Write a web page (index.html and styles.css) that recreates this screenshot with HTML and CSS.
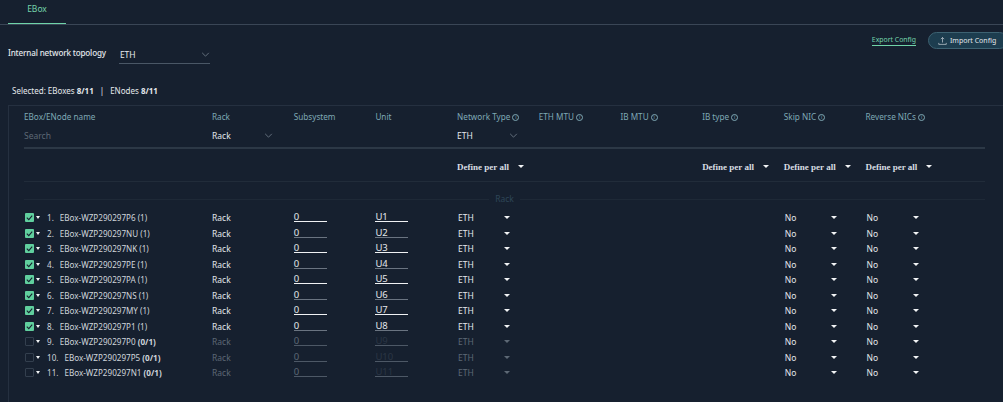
FILE: index.html
```html
<!DOCTYPE html>
<html lang="en">
<head>
    <meta charset="UTF-8">
    <title>EBox config</title>
    <link rel="stylesheet" href="styles.css">
</head>
<body>
    <div class="tabs">
        <div class="tab">EBox</div>
    </div>

    <div class="toolbar">
        <div class="topology">
            <span class="topology-label">Internal network topology</span>
            <div class="topology-select">
                <span>ETH</span>
                <svg class="chevron" viewBox="0 0 10 6"><path d="M1 1l4 4 4-4"/></svg>
            </div>
        </div>
        <div class="actions">
            <a class="export-link">Export Config</a>
            <button class="import-btn">
                <svg viewBox="0 0 12 12"><path d="M6 8V1.5M3.8 3.5L6 1.3l2.2 2.2M1 8.5v2h10v-2"/></svg>
                Import Config
            </button>
        </div>
    </div>

    <div class="selected">Selected: EBoxes <b>8/11</b><span class="sep">|</span>ENodes <b>8/11</b></div>

    <div class="panel">
        <div class="row head">
            <div>EBox/ENode name</div>
            <div>Rack</div>
            <div>Subsystem</div>
            <div>Unit</div>
            <div>Network Type <i class="info">i</i></div>
            <div>ETH MTU <i class="info">i</i></div>
            <div>IB MTU <i class="info">i</i></div>
            <div>IB type <i class="info">i</i></div>
            <div>Skip NIC <i class="info">i</i></div>
            <div>Reverse NICs <i class="info">i</i></div>
        </div>
        <div class="row filters">
            <div class="search">Search</div>
            <div class="filter-select">Rack <svg class="chevron" viewBox="0 0 10 6"><path d="M1 1l4 4 4-4"/></svg></div>
            <div></div>
            <div></div>
            <div class="filter-select">ETH <svg class="chevron" viewBox="0 0 10 6"><path d="M1 1l4 4 4-4"/></svg></div>
        </div>
        <div class="row define">
            <div></div><div></div><div></div><div></div>
            <div class="per-all">Define per all <span class="caret"></span></div>
            <div></div><div></div>
            <div class="per-all">Define per all <span class="caret"></span></div>
            <div class="per-all">Define per all <span class="caret"></span></div>
            <div class="per-all">Define per all <span class="caret"></span></div>
        </div>
        <div class="group"><span>Rack</span></div>
        <div id="rows"></div>
    </div>

    <script>
        const boxes = [
            ['P6', 1], ['NU', 1], ['NK', 1], ['PE', 1], ['PA', 1], ['NS', 1],
            ['MY', 1], ['P1', 1], ['P0', 0], ['P5', 0], ['N1', 0]
        ];

        const html = boxes.map((box, index) => {
            const on = box[1] === 1;
            const check = on
                ? '<span class="check on"><svg viewBox="0 0 10 10"><path d="M2 5.2l2.2 2.2L8 3"/></svg></span>'
                : '<span class="check"></span>';
            const count = on ? '(1)' : '<b>(0/1)</b>';
            const underline = index % 2 === 0 ? 'field' : 'field dim';
            return `<div class="row item ${on ? '' : 'off'}">
                <div class="name">${check}<span class="caret small"></span>
                    <span class="num">${index + 1}.</span>
                    <span class="box">EBox-WZP290297${box[0]} ${count}</span></div>
                <div class="muted">Rack</div>
                <div class="${underline} muted">0</div>
                <div class="${underline} unit muted">U${index + 1}</div>
                <div class="pick muted"><span>ETH</span><span class="caret"></span></div>
                <div></div><div></div><div></div>
                <div class="pick"><span>No</span><span class="caret"></span></div>
                <div class="pick"><span>No</span><span class="caret"></span></div>
            </div>`;
        }).join('');
        document.getElementById('rows').innerHTML = html;
    </script>
</body>
</html>
```

FILE: styles.css
```css
body {
    margin: 0;
    height: 402px;
    overflow: hidden;
    background: #16202f;
    color: #e4e8ec;
    font-family: "Noto Sans", Roboto, sans-serif;
    font-size: 8.5px;
}

.tabs {
    height: 24px;
    border-bottom: 1px solid #3a4656;
    padding-left: 8px;
}

.tab {
    width: 58px;
    height: 23px;
    border-bottom: 1px solid #6fd3a8;
    color: #74d3ab;
    text-align: center;
    line-height: 18px;
}

.toolbar {
    display: flex;
    justify-content: space-between;
    height: 53px;
    padding: 7px 0 0 8px;
}

.topology {
    display: flex;
    align-items: flex-start;
    margin-top: 13px;
}

.topology-label {
    font-size: 8.1px;
    font-weight: 500;
    letter-spacing: -0.16px;
    line-height: 15px;
}

.topology-select {
    display: flex;
    justify-content: space-between;
    align-items: center;
    width: 91px;
    height: 19px;
    margin-left: 13px;
    padding-left: 1px;
    border-bottom: 1px solid #4a5766;
    box-sizing: border-box;
}

.chevron {
    width: 9px;
    height: 5px;
    fill: none;
    stroke: #8a96a3;
    stroke-width: 0.8;
}

.actions {
    display: flex;
    align-items: flex-start;
}

.export-link {
    margin-top: 2px;
    border-bottom: 1px solid #6fd3a8;
    color: #74d3ab;
    font-size: 6.9px;
    line-height: 11px;
}

.import-btn {
    display: flex;
    align-items: center;
    gap: 3px;
    width: 80px;
    height: 17px;
    margin: 0 -5px 0 12px;
    padding: 0 0 0 9px;
    border: 1px solid #3d6272;
    border-radius: 9px;
    background: #1d3d4f;
    color: #e4e8ec;
    font-family: inherit;
    font-size: 7px;
}

.import-btn svg {
    width: 9px;
    height: 10px;
    fill: none;
    stroke: #e4e8ec;
    stroke-width: 0.8;
}

.selected {
    height: 20px;
    padding-left: 12px;
    font-size: 8px;
    line-height: 12px;
}

.sep {
    margin: 0 6px;
}

.panel {
    height: 296px;
    margin-left: 8px;
    padding-left: 15px;
    border-top: 1px solid #253040;
    border-left: 1px solid #253040;
}

.row {
    display: grid;
    grid-template-columns: 188px repeat(9, 81.7px);
}

.head {
    height: 21px;
    color: #7fa9b5;
    font-size: 8.2px;
    line-height: 21px;
}

.info {
    display: inline-block;
    width: 5px;
    height: 5px;
    border: 1px solid #7fa9b5;
    border-radius: 50%;
    font-size: 5px;
    font-style: normal;
    line-height: 5px;
    text-align: center;
    vertical-align: 1px;
}

.filters {
    width: 961px;
    height: 16px;
    padding-bottom: 4px;
    border-bottom: 2px solid #2c3846;
    align-items: center;
}

.search {
    color: #5d6875;
}

.filter-select {
    display: flex;
    justify-content: space-between;
    align-items: center;
    width: 61px;
}

.define {
    width: 961px;
    height: 29px;
    padding-top: 3px;
    border-bottom: 1px solid #212c3a;
    align-items: center;
}

.per-all {
    display: flex;
    align-items: center;
    gap: 9px;
    color: #d8dde2;
    font-family: "Liberation Serif", serif;
    font-size: 9px;
    font-weight: 700;
}

.caret {
    display: inline-block;
    width: 0;
    height: 0;
    border-left: 3.5px solid transparent;
    border-right: 3.5px solid transparent;
    border-top: 3.5px solid #f2f4f6;
}

.caret.small {
    margin: 0 7px 0 2px;
    border-left-width: 2.5px;
    border-right-width: 2.5px;
    border-top-width: 3px;
}

.group {
    width: 961px;
    height: 28px;
    color: #2e4658;
    line-height: 34px;
    text-align: center;
    background: linear-gradient(#1e2937, #1e2937) center 17px / 100% 1px no-repeat;
}

.group span {
    padding: 0 6px;
    background: #16202f;
}

.item {
    height: 15.5px;
    align-items: center;
    line-height: 15.5px;
}

.name {
    display: flex;
    align-items: center;
    color: #cfd5db;
    font-size: 8.1px;
}

.check {
    display: inline-block;
    width: 9px;
    height: 9px;
    margin-left: 1px;
    border: 1px solid #333f4e;
    border-radius: 1px;
    box-sizing: border-box;
}

.check.on {
    border: 0;
    background: #60cf9e;
}

.check svg {
    display: block;
    fill: none;
    stroke: #16202f;
    stroke-width: 1.2;
}

.num {
    margin-right: 6px;
}

.muted {
    color: #e4e8ec;
}

.off .muted {
    color: #5d6875;
}

.off .unit {
    color: #2b3645;
}

.field {
    width: 33px;
    height: 10px;
    margin-bottom: 2px;
    border-bottom: 1px solid #f0f2f4;
    font-size: 9.5px;
    line-height: 11px;
}

.field.dim {
    border-bottom-color: #6a7481;
}

.off .field {
    border-bottom-color: #4d5866;
}

.pick {
    display: flex;
    align-items: center;
    justify-content: space-between;
    width: 52px;
    padding-left: 1px;
}

.off .pick.muted .caret {
    border-top-color: #5d6875;
}
```
